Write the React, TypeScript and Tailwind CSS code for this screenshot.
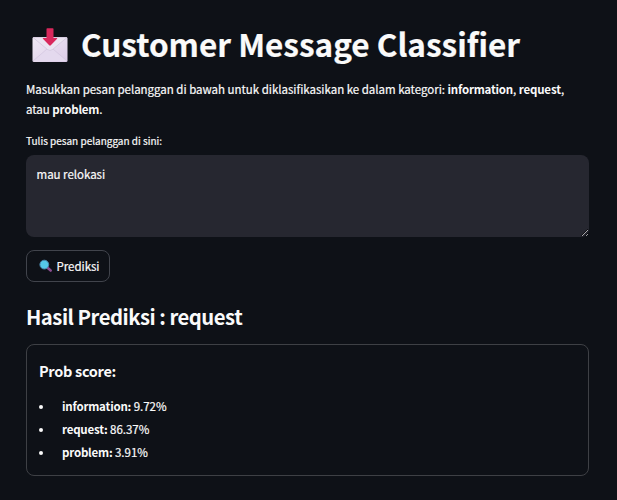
const scores = [
  { label: 'information:', value: '9.72%' },
  { label: 'request:', value: '86.37%' },
  { label: 'problem:', value: '3.91%' },
];

function EnvelopeIcon() {
  return (
    <svg width="36" height="36" viewBox="0 0 36 36" className="shrink-0">
      <defs>
        <linearGradient id="paper" x1="0" y1="0" x2="1" y2="1">
          <stop offset="0" stopColor="#f0eaf4" />
          <stop offset="1" stopColor="#dccbe8" />
        </linearGradient>
      </defs>
      <rect x="0.5" y="9" width="35" height="25" rx="1.5" fill="url(#paper)" />
      <path d="M1 33 15 21h6l14 12" fill="#e4d9ee" stroke="#d3c6df" strokeWidth="0.7" />
      <path d="M1 9.500h34L20.500 21.500q-2.500 2-5 0Z" fill="#ebe4f1" stroke="#d0c4db" strokeWidth="0.7" />
      <path d="M14.500 1q0-.7.7-.7h5.600q.7 0 .7.700v9h3.200q1 0 .4.800l-6.300 6.500q-.8.700-1.600 0l-6.300-6.500q-.6-.8.400-.8h3.200Z" fill="#d9285c" />
    </svg>
  );
}

function SearchIcon() {
  return (
    <svg width="14" height="14" viewBox="0 0 14 14" className="shrink-0">
      <path d="m8.500 8.800 3.200 2.700" stroke="#8b4d8f" strokeWidth="2.600" strokeLinecap="round" />
      <circle cx="5.300" cy="5.600" r="4.400" fill="#55c8e8" stroke="#4a86ad" strokeWidth="1" />
    </svg>
  );
}

export default function App() {
  return (
    <main className="h-[500px] w-[617px] overflow-hidden bg-[#0e1117] pl-[26px] pr-7 pt-[25px] font-['Noto_Sans_CJK_SC','Noto_Sans',sans-serif] text-[11.5px] tracking-[-0.02px] text-[#fafafa] [-webkit-text-stroke:0.2px_#fafafa]">
      <h1 className="flex h-9 items-center gap-[13px] whitespace-nowrap text-[31.5px] font-bold leading-9 tracking-normal">
        <span className="ml-1.5 mt-[5px] flex"><EnvelopeIcon /></span>
        Customer Message Classifier
      </h1>
      <p className="mt-[18px] whitespace-nowrap leading-5">
        Masukkan pesan pelanggan di bawah untuk diklasifikasikan ke dalam kategori: <strong className="tracking-[-0.22px] [-webkit-text-stroke:0px]">information</strong>, <strong className="tracking-[-0.15px] [-webkit-text-stroke:0px]">request</strong>,
        <br />
        atau <strong className="tracking-[-0.2px] [-webkit-text-stroke:0px]">problem</strong>.
      </p>
      <label htmlFor="message" className="mt-3 block text-[10px] leading-5 tracking-normal">Tulis pesan pelanggan di sini:</label>
      <textarea
        id="message"
        defaultValue="mau relokasi"
        className="mt-1 block h-[82px] w-full resize-y rounded-lg bg-[#262730] px-[10.5px] py-[9px] leading-5 outline-none"
      />
      <button className="mt-[13px] flex h-8 w-[84px] items-center gap-[3.5px] rounded-lg border border-[#41444c] pl-3">
        <SearchIcon />
        <span className="pt-0.5">Prediksi</span>
      </button>
      <h2 className="mt-[18px] text-[20.3px] font-bold leading-8 tracking-[-0.5px] [-webkit-text-stroke:0px]">Hasil Prediksi : request</h2>
      <section className="mt-3 h-[132px] rounded-lg border border-[#3e4045] px-3 pt-4">
        <h3 className="text-[14.5px] font-bold leading-5 tracking-[-0.3px] [-webkit-text-stroke:0px]">Prob score:</h3>
        <ul className="mt-3.5">
          {scores.map((s) => (
            <li key={s.label} className="flex h-[23px] items-center">
              <span className="mr-[19px] size-1 rounded-full bg-[#fafafa]" />
              <span><strong className="tracking-[-0.2px] [-webkit-text-stroke:0px]">{s.label}</strong> {s.value}</span>
            </li>
          ))}
        </ul>
      </section>
    </main>
  );
}
